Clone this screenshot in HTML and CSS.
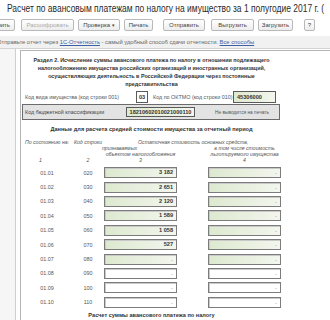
FILE: index.html
```html
<!DOCTYPE html>
<html lang="ru">
<head>
<meta charset="utf-8">
<link rel="stylesheet" href="styles.css">
</head>
<body>
<div class="title"><span class="title-text">Расчет по авансовым платежам по налогу на имущество за 1 полугодие 2017 г. (</span></div>
<div class="toolbar">
  <span class="btn b1">Заполнить</span>
  <span class="btn b2 dis">Расшифровать</span>
  <span class="btn b3">Проверка <span class="caret">▾</span></span>
  <span class="btn b4">Печать</span>
  <span class="btn b5">Отправить</span>
  <span class="btn b6">Выгрузить</span>
  <span class="btn b7">Загрузить</span>
  <span class="btn b8">?</span>
</div>
<div class="info">Отправьте отчет через <a class="lnk">1С-Отчетность</a> - самый удобный способ сдачи отчетности. <a class="lnk">Все способы</a></div>
<div class="main">
  <div class="nav"></div>
  <div class="form">
    <div class="content">
      <div class="h2">Раздел 2. Исчисление суммы авансового платежа по налогу в отношении подлежащего<br>налогообложению имущества российских организаций и иностранных организаций,<br>осуществляющих деятельность в Российской Федерации через постоянные<br>представительства</div>
      <div class="row1">
        <span class="lab1">Код вида имущества (код строки 001)</span>
        <span class="fld w03">03</span>
        <span class="lab2">Код по ОКТМО (код строки 010)</span>
        <span class="fld green woktmo">45306000</span>
      </div>
      <div class="kbk">
        <span class="lab3">Код бюджетной классификации</span>
        <span class="fld green wkbk">18210602010021000110</span>
        <span class="note">Не выводится на печать</span>
      </div>
      <div class="h3">Данные для расчета средней стоимости имущества за отчетный период</div>
      <div class="grid">
        <div class="hc c1 r1">По состоянию на:</div>
        <div class="hc c2 r1">Код строки</div>
        <div class="hc c35 r1">Остаточная стоимость основных средств,</div>
        <div class="hc c3 r2">признаваемых</div>
        <div class="hc c5 r2">в том числе стоимость</div>
        <div class="hc c3 r3">объектом налогообложения</div>
        <div class="hc c5 r3">льготируемого имущества</div>
        <div class="hn c1n r4">1</div>
        <div class="hn c2 r4">2</div>
        <div class="hn c3 r4">3</div>
        <div class="hn c5 r4">4</div>
      </div>
      <div class="rows">
        <div class="drow"><span class="dt">01.01</span><span class="cd">020</span><span class="box green">3 182</span><span></span><span class="box green empty">-</span></div>
        <div class="drow"><span class="dt">01.02</span><span class="cd">030</span><span class="box green">2 651</span><span></span><span class="box green empty">-</span></div>
        <div class="drow"><span class="dt">01.03</span><span class="cd">040</span><span class="box green">2 120</span><span></span><span class="box green empty">-</span></div>
        <div class="drow"><span class="dt">01.04</span><span class="cd">050</span><span class="box green">1 589</span><span></span><span class="box green empty">-</span></div>
        <div class="drow"><span class="dt">01.05</span><span class="cd">060</span><span class="box green">1 058</span><span></span><span class="box green empty">-</span></div>
        <div class="drow"><span class="dt">01.06</span><span class="cd">070</span><span class="box green">527</span><span></span><span class="box green empty">-</span></div>
        <div class="drow"><span class="dt">01.07</span><span class="cd">080</span><span class="box green empty">-</span><span></span><span class="box green empty">-</span></div>
        <div class="drow"><span class="dt">01.08</span><span class="cd">090</span><span class="box empty">-</span><span></span><span class="box empty">-</span></div>
        <div class="drow"><span class="dt">01.09</span><span class="cd">100</span><span class="box empty">-</span><span></span><span class="box empty">-</span></div>
        <div class="drow"><span class="dt">01.10</span><span class="cd">110</span><span class="box empty">-</span><span></span><span class="box empty">-</span></div>
      </div>
      <div class="h3 last">Расчет суммы авансового платежа по налогу</div>
    </div>
  </div>
</div>
</body>
</html>
```

FILE: styles.css
```css
html, body {
  margin: 0;
  padding: 0;
  background: #ffffff;
}
body {
  width: 330px;
  height: 320px;
  overflow: hidden;
  font-family: "Liberation Sans", Arial, sans-serif;
  color: #333;
}
.title {
  height: 16px;
  line-height: 17px;
  padding-left: 7px;
  font-size: 10px;
  color: #2a2a2a;
  white-space: nowrap;
  overflow: hidden;
}
.title-text {
  display: inline-block;
  transform: scaleX(0.845);
  transform-origin: left center;
}
.toolbar {
  margin-top: 3px;
  height: 12px;
  display: flex;
  white-space: nowrap;
}
.btn {
  box-sizing: border-box;
  height: 12px;
  line-height: 10px;
  font-size: 6px;
  color: #444;
  text-align: center;
  border: 1px solid #b9b9b9;
  border-radius: 2px;
  background: linear-gradient(#ffffff, #ededed);
  flex: none;
}
.btn.dis { color: #aaa; }
.caret { font-size: 5px; }
.b1 { width: 40px; margin-left: -25px; text-align: right; padding-right: 4px; }
.b2 { width: 53px; margin-left: 6px; }
.b3 { width: 42px; margin-left: 4px; }
.b4 { width: 29px; margin-left: 4px; }
.b5 { width: 42px; margin-left: 10px; }
.b6 { width: 43px; margin-left: 6px; }
.b7 { width: 35px; margin-left: 4px; }
.b8 { width: 11px; margin-left: 11px; }
.info {
  margin-top: 5px;
  height: 12px;
  line-height: 12px;
  background: #f1f1f1;
  font-size: 5.8px;
  color: #666;
  white-space: nowrap;
  text-indent: -3px;
}
.lnk {
  color: #3d5fa6;
  text-decoration: underline;
}
.main {
  display: flex;
  border-top: 1px solid #d4d4d4;
  height: 271px;
  overflow: hidden;
}
.nav {
  width: 15px;
  flex: none;
  background: #f6f6f6;
  border-right: 1px solid #cfcfcf;
  margin-right: 4px;
}
.form {
  flex: 1;
  margin-top: 1px;
  border-top: 1px solid #b4b4b4;
  border-left: 1px solid #b4b4b4;
  overflow: hidden;
}
.content {
  width: 259px;
  padding-left: 1px;
  padding-top: 5px;
}
.h2 {
  text-align: center;
  font-weight: bold;
  font-size: 5.4px;
  line-height: 8px;
  color: #333;
  white-space: nowrap;
}
.row1 {
  margin-top: 3px;
  height: 12px;
  display: flex;
  align-items: center;
  font-size: 5.4px;
  color: #555;
  white-space: nowrap;
}
.lab1 { width: 111px; padding-left: 3px; }
.lab2 { width: 80px; margin-left: 5px; }
.fld {
  box-sizing: border-box;
  display: inline-block;
  border: 1px solid #5a5a5a;
  background: #fff;
  font-weight: bold;
  color: #333;
  font-size: 5.6px;
  text-align: center;
  flex: none;
}
.w03 { width: 12px; height: 12px; line-height: 10px; }
.woktmo { width: 43px; height: 12px; line-height: 10px; text-align: left; padding-left: 3px; }
.green {
  background: linear-gradient(100deg, #dde9cf 0%, #e9f0e0 55%, #f3f6ee 100%);
}
.kbk {
  box-sizing: border-box;
  margin-top: 1px;
  width: 258px;
  height: 16px;
  border: 1px solid #6b6b6b;
  background: #e3e3e3;
  display: flex;
  align-items: center;
  font-size: 5.4px;
  color: #444;
  white-space: nowrap;
}
.lab3 { width: 101px; padding-left: 2px; }
.wkbk { width: 69px; height: 10px; line-height: 8px; }
.note { margin-left: 20px; font-size: 4.8px; color: #555; }
.h3 {
  margin-top: 5px;
  text-align: center;
  font-weight: bold;
  font-size: 5.6px;
  line-height: 8px;
  color: #333;
  white-space: nowrap;
}
.grid {
  margin-top: 6px;
  display: grid;
  grid-template-columns: 50px 32px 73px 31px 73px;
  grid-template-rows: 6px 6px 6px 7px;
  font-style: italic;
  font-size: 5.2px;
  color: #555;
  white-space: nowrap;
}
.hc, .hn { text-align: center; line-height: 6px; }
.hn { line-height: 7px; }
.c1 { grid-column: 1; }
.c1n { grid-column: 1; text-align: left; padding-left: 17px; }
.c2 { grid-column: 2; }
.c3 { grid-column: 3; }
.c5 { grid-column: 5; }
.c35 { grid-column: 3 / 6; text-align: left; padding-left: 34px; }
.r1 { grid-row: 1; }
.r2 { grid-row: 2; }
.r3 { grid-row: 3; }
.r4 { grid-row: 4; }
.c3.r2 { text-align: left; padding-left: 0; margin-left: -2px; }
.rows {
  margin-top: 1.5px;
}
.drow {
  display: grid;
  grid-template-columns: 50px 32px 73px 31px 73px;
  height: 14.4px;
  align-items: center;
  font-size: 5.4px;
  color: #555;
}
.dt { text-align: center; }
.cd { text-align: center; }
.box {
  box-sizing: border-box;
  height: 11px;
  border: 1px solid #7c7c7c;
  box-shadow: inset 1px 1px 0 #c9c9c9;
  background: #fff;
  text-align: right;
  padding-right: 3px;
  font-weight: bold;
  font-size: 5.6px;
  line-height: 9px;
  color: #333;
}
.box.green {
  background: linear-gradient(100deg, #dde9cf 0%, #e9f0e0 55%, #f3f6ee 100%);
}
.box.empty {
  font-weight: normal;
  color: #888;
  font-size: 5px;
  line-height: 11px;
}
.h3.last { margin-top: 1.5px; }
```
